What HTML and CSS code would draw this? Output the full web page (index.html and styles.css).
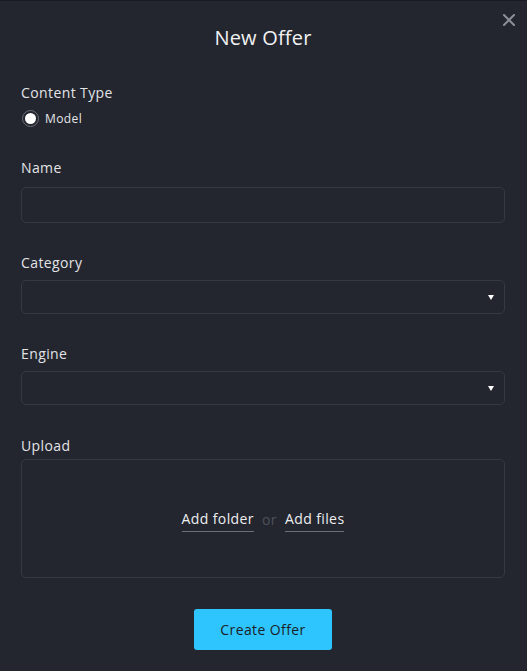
FILE: index.html
```html
<!DOCTYPE html>
<html lang="en">
<head>
<meta charset="utf-8">
<title>New Offer</title>
<link rel="stylesheet" href="styles.css">
</head>
<body>
<div class="modal">
  <button class="close" aria-label="Close">
    <svg width="12" height="12" viewBox="0 0 12 12"><path d="M1 1L11 11M11 1L1 11" stroke="#8b8e95" stroke-width="2" stroke-linecap="square"/></svg>
  </button>
  <h1 class="title">New Offer</h1>

  <div class="field field-first">
    <div class="label">Content Type</div>
    <label class="radio-row">
      <span class="radio"><span class="radio-dot"></span></span>
      <span class="radio-text">Model</span>
    </label>
  </div>

  <div class="field field-name">
    <div class="label">Name</div>
    <div class="input"></div>
  </div>

  <div class="field">
    <div class="label">Category</div>
    <div class="input select"><span class="caret"></span></div>
  </div>

  <div class="field">
    <div class="label">Engine</div>
    <div class="input select"><span class="caret"></span></div>
  </div>

  <div class="field field-upload">
    <div class="label">Upload</div>
    <div class="upload">
      <span class="link">Add folder</span>
      <span class="or">or</span>
      <span class="link">Add files</span>
    </div>
  </div>

  <div class="actions">
    <button class="primary">Create Offer</button>
  </div>
</div>
</body>
</html>
```
FILE: styles.css
```css
* { box-sizing: border-box; }
html, body {
  margin: 0;
  padding: 0;
  background: #23262f;
  height: 100%;
}
body {
  font-family: "Open Sans", "Liberation Sans", sans-serif;
  color: #e4e5e8;
  border-top: 1px solid #191b20;
  letter-spacing: 0.4px;
}
.modal {
  position: relative;
  padding: 25px 22px 0 21px;
}
.close {
  position: absolute;
  top: 12px;
  right: 11px;
  width: 14px;
  height: 14px;
  padding: 1px;
  border: 0;
  background: none;
  display: flex;
}
.title {
  margin: 0;
  font-size: 20px;
  line-height: 24px;
  font-weight: 400;
  text-align: center;
  color: #f2f2f4;
  letter-spacing: 0.2px;
}
.field { margin-top: 30px; }
.field-first { margin-top: 33px; }
.field-name { margin-top: 32px; }
.field-upload { margin-top: 31px; }
.label {
  font-size: 14px;
  line-height: 20px;
  color: #e2e3e6;
  margin-bottom: 7px;
}
.field-name .label { margin-bottom: 9px; }
.field-upload .label { margin-bottom: 3px; }
.radio-row {
  display: flex;
  align-items: center;
  height: 16px;
}
.radio {
  width: 17px;
  height: 17px;
  border: 1px solid #6c6f77;
  border-radius: 50%;
  display: flex;
  align-items: center;
  justify-content: center;
  margin-left: 1px;
}
.radio-dot {
  width: 11px;
  height: 11px;
  border-radius: 50%;
  background: #ffffff;
}
.radio-text {
  font-size: 12px;
  margin-left: 6px;
  color: #e4e5e8;
}
.input {
  height: 36px;
  border: 1px solid #363944;
  border-radius: 5px;
  background: #23262f;
}
.select {
  height: 34px;
  display: flex;
  align-items: center;
  justify-content: flex-end;
  padding-right: 10px;
}
.caret {
  width: 0;
  height: 0;
  border-left: 3.5px solid transparent;
  border-right: 3.5px solid transparent;
  border-top: 5px solid #ffffff;
}
.upload {
  height: 119px;
  border: 1px solid #363944;
  border-radius: 5px;
  display: flex;
  align-items: center;
  justify-content: center;
  font-size: 14px;
  padding-top: 5px;
}
.link {
  color: #eeeef0;
  border-bottom: 1px solid #6c6f77;
  padding-bottom: 3px;
  line-height: 18px;
}
.or {
  color: #4d5059;
  margin: 0 8px;
  padding-bottom: 4px;
}
.actions {
  display: flex;
  justify-content: center;
  margin-top: 31px;
}
.primary {
  width: 138px;
  height: 41px;
  border: 0;
  border-radius: 3px;
  background: #2ec5ff;
  color: #1b1e26;
  font-family: "Open Sans", "Liberation Sans", sans-serif;
  font-size: 14px;
  letter-spacing: 0.4px;
}
```
